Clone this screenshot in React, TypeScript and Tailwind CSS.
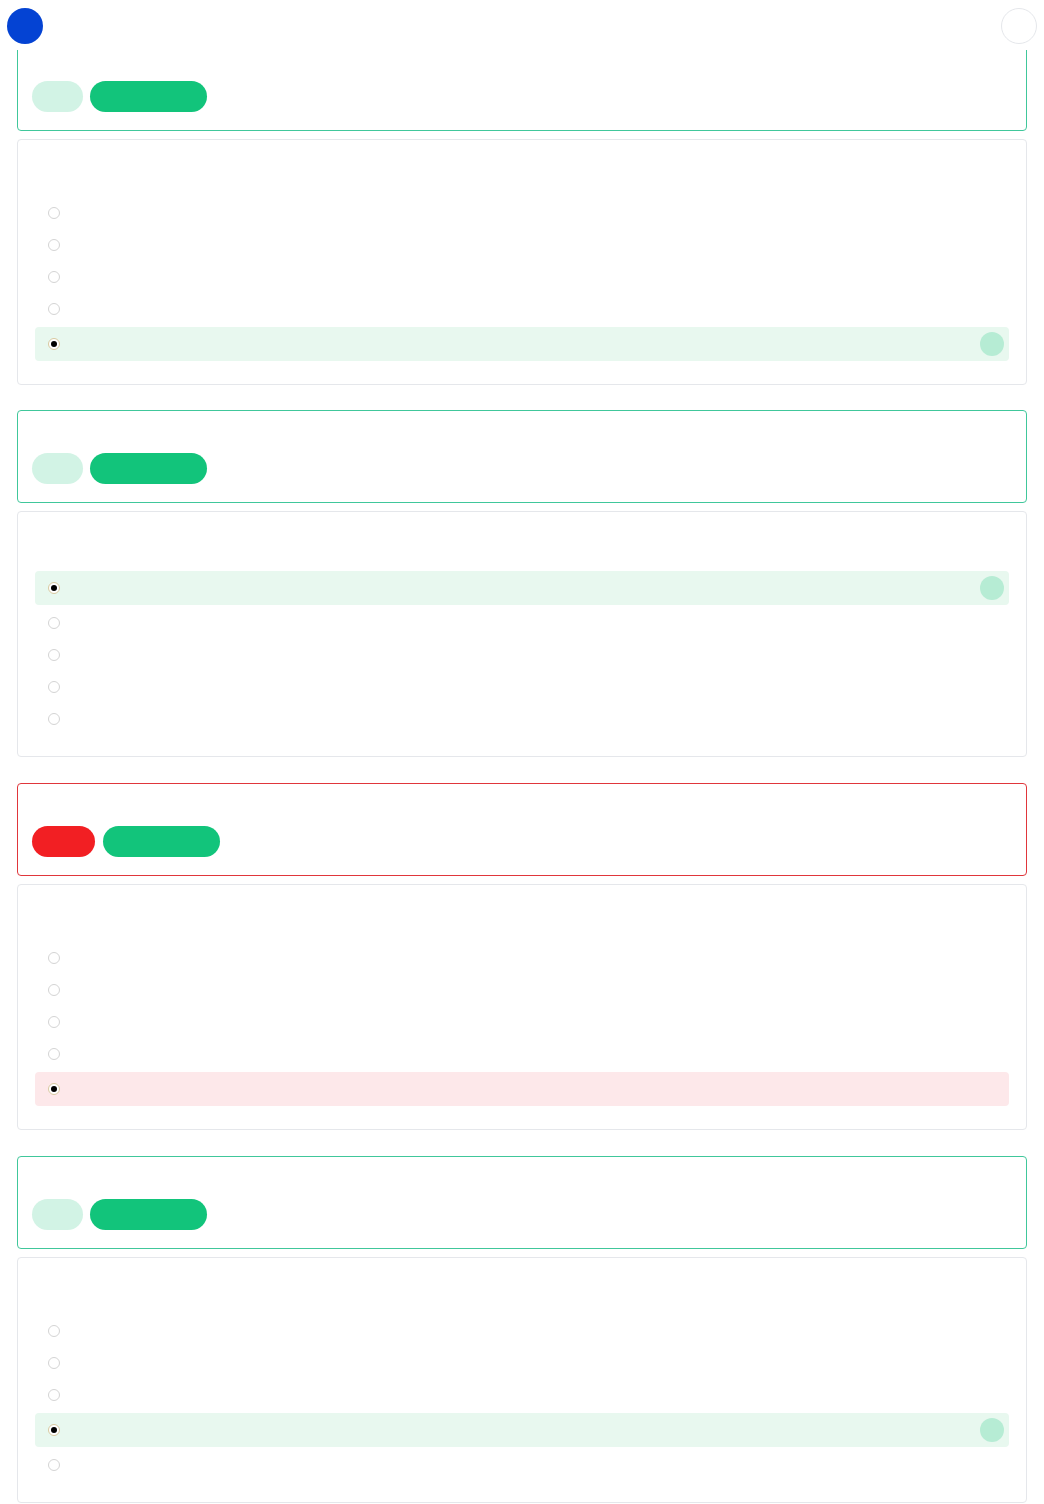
import React from 'react';

type Group = {
  wrong: boolean;
  selected: number;
};

const groups: Group[] = [
  { wrong: false, selected: 4 },
  { wrong: false, selected: 0 },
  { wrong: true, selected: 4 },
  { wrong: false, selected: 3 },
];

const Radio = ({ checked }: { checked: boolean }) =>
  checked ? (
    <span className="flex h-3 w-3 items-center justify-center rounded-full border border-[#d8c9a0] bg-white">
      <span className="h-[6px] w-[6px] rounded-full bg-black" />
    </span>
  ) : (
    <span className="h-3 w-3 rounded-full border border-[#d4d4d4] bg-white" />
  );

const HeaderCard = ({ wrong }: { wrong: boolean }) => (
  <div
    className={`rounded-[4px] border bg-white px-[14px] pb-[18px] pt-[42px] ${
      wrong ? 'border-[#e0363b]' : 'border-[#40c79b]'
    }`}
  >
    <div className="flex gap-[7px]">
      {wrong ? (
        <span className="h-[31px] w-[63px] rounded-full bg-[#f21f23]" />
      ) : (
        <span className="h-[31px] w-[51px] rounded-full bg-[#d2f3e5]" />
      )}
      <span className={`h-[31px] w-[117px] rounded-full bg-[#12c47b] ${wrong ? 'ml-[1px]' : ''}`} />
    </div>
  </div>
);

const OptionsCard = ({ wrong, selected }: Group) => (
  <div className="mt-2 rounded-[4px] border border-[#e5e7eb] bg-white px-[17px] pb-[21px] pt-[57px]">
    {[0, 1, 2, 3, 4].map((i) =>
      i === selected ? (
        <div
          key={i}
          className={`my-[2px] flex h-[34px] items-center justify-between rounded-[4px] pl-[13px] pr-[5px] ${
            wrong ? 'bg-[#fde8ea]' : 'bg-[#e8f8ef]'
          }`}
        >
          <Radio checked />
          {!wrong && <span className="h-6 w-6 rounded-full bg-[#b6ecd4]" />}
        </div>
      ) : (
        <div key={i} className="flex h-8 items-center pl-[13px]">
          <Radio checked={false} />
        </div>
      )
    )}
  </div>
);

export default function App() {
  return (
    <div className="min-h-screen bg-white font-['Liberation_Sans',sans-serif]">
      <header className="relative z-10 flex h-[50px] items-start justify-between bg-white px-[7px] pt-2">
        <span className="h-9 w-9 rounded-full bg-[#0443d3]" />
        <span className="h-9 w-9 rounded-full border border-[#e5e7eb] bg-white" />
      </header>
      <main className="-mt-3 flex flex-col px-[17px] pb-6">
        {groups.map((g, idx) => (
          <section key={idx} className={idx === 0 ? '' : idx === 1 ? 'mt-[25px]' : 'mt-[26px]'}>
            <HeaderCard wrong={g.wrong} />
            <OptionsCard {...g} />
          </section>
        ))}
      </main>
    </div>
  );
}
